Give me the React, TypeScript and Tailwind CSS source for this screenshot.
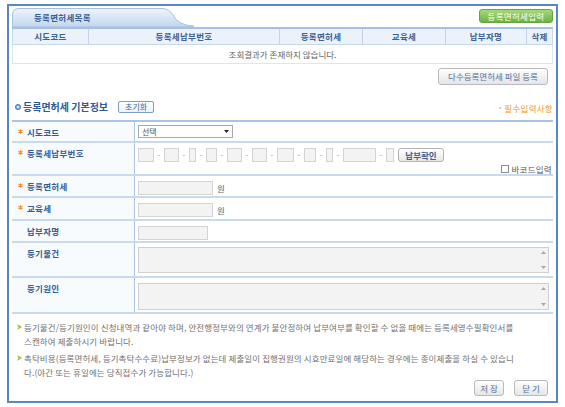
import React from 'react';

const boxes = [16, 15, 7, 11, 15, 15, 17, 12, 7, 33, 8];

// small orange required mark
const Req = () => (
  <svg width="5" height="5" viewBox="0 0 6 6" className="mt-[3px]">
    <path d="M3 0.3 V5.7 M0.6 1.6 L5.4 4.4 M0.6 4.4 L5.4 1.6" stroke="#f08a1d" strokeWidth="1.3" />
  </svg>
);

const Label = ({ text, req }: { text: string; req?: boolean }) => (
  <div className="w-[123px] shrink-0 border-r border-[#aac3e4] bg-[#f8fbfe] flex items-start pl-[6px] pt-[4px]">
    <span className="w-[9px] h-[12px] flex items-start">{req ? <Req /> : null}</span>
    <span className="text-[8.5px] leading-[12px] font-bold tracking-[0.3px] text-[#345d92]">{text}</span>
  </div>
);

const Row = ({ h, children }: { h: string; children: React.ReactNode }) => (
  <div className={`flex border-b-2 border-[#c9daef] ${h}`}>{children}</div>
);

const TextBox = ({ w }: { w: string }) => (
  <div className={`h-[14px] bg-[#f3f3f3] border border-[#d3d3d3] ${w}`} />
);

const Area = ({ h }: { h: string }) => (
  <div className={`w-[411px] ${h} bg-[#f3f3f3] border border-[#cfcfcf] flex justify-end`}>
    <div className="w-[10px] flex flex-col justify-between items-center py-[3px]">
      <svg width="5" height="3" viewBox="0 0 5 3"><path d="M2.5 0 L5 3 L0 3 Z" fill="#a8a8a8" /></svg>
      <svg width="5" height="3" viewBox="0 0 5 3"><path d="M0 0 L5 0 L2.5 3 Z" fill="#a8a8a8" /></svg>
    </div>
  </div>
);

const NoteMark = () => (
  <svg width="5" height="6" viewBox="0 0 5 6" className="mt-[4px] mr-[2px] shrink-0">
    <path d="M0 0 L5 3 L0 6 L1.5 3 Z" fill="#a3bd3c" />
  </svg>
);

const GrayBtn = ({ children, w }: { children: React.ReactNode; w: string }) => (
  <button className={`h-[16px] ${w} border border-[#b9b9b9] rounded-[3px] bg-gradient-to-b from-white to-[#e6e6e6] text-[8.5px] leading-[14px] text-[#4f6f99]`}>
    {children}
  </button>
);

export default function App() {
  return (
    <div className="w-[565px] h-[407px] bg-white pt-[4px] pl-[7px] font-['Noto_Sans_CJK_KR',sans-serif]">
      <div className="w-[551px] h-[399px] border-2 border-[#5b86c4] px-[3px] pt-[2px] flex flex-col">
        {/* list tab + add button */}
        <div className="flex items-start justify-between h-[19px]">
          <div className="relative w-[182px] h-[19px] pl-[22px]">
            <svg className="absolute inset-0" width="182" height="19" viewBox="0 0 182 19">
              <defs>
                <linearGradient id="tabg" x1="0" y1="0" x2="0" y2="1">
                  <stop offset="0" stopColor="#eef4fb" />
                  <stop offset="1" stopColor="#c3d6ef" />
                </linearGradient>
              </defs>
              <path d="M0.5 19 V7 Q0.5 0.5 7 0.5 H150 Q157 0.5 161 7 Q166 17.5 182 18 V19 Z" fill="url(#tabg)" stroke="#a4bfe1" />
            </svg>
            <span className="relative block pt-[3px] text-[8.5px] leading-[12px] font-bold tracking-[0.3px] text-[#3a5f93]">등록면허세목록</span>
          </div>
          <button className="mt-[1px] w-[74px] h-[14px] rounded-[3px] border border-[#66a640] bg-gradient-to-b from-[#a6d977] to-[#6cb244] text-white text-[8.5px] leading-[12px] tracking-[0.3px]">
            등록면허세입력
          </button>
        </div>
        <div className="h-[2px] bg-[#a6c0e3]" />

        {/* list table */}
        <div className="flex h-[16px] bg-[#ecf2fa] border-x border-b border-[#c8d8ec] text-[8.5px] font-bold text-[#3d6195] tracking-[0.3px]">
          <div className="w-[76px] border-r border-[#c3d4ea] flex items-center justify-center">시도코드</div>
          <div className="w-[191px] border-r border-[#c3d4ea] flex items-center justify-center">등록세납부번호</div>
          <div className="w-[83px] border-r border-[#c3d4ea] flex items-center justify-center">등록면허세</div>
          <div className="w-[83px] border-r border-[#c3d4ea] flex items-center justify-center">교육세</div>
          <div className="w-[81px] border-r border-[#c3d4ea] flex items-center justify-center">납부자명</div>
          <div className="flex-1 flex items-center justify-center">삭제</div>
        </div>
        <div className="h-[19px] border-x border-b border-[#dde5ef] flex items-center justify-center text-[8.5px] text-[#666]">
          조회결과가 존재하지 않습니다.
        </div>

        <div className="mt-[4px] flex justify-end pr-[5px]">
          <button className="h-[17px] w-[110px] border border-[#bababa] rounded-[3px] bg-gradient-to-b from-white to-[#e5e5e5] text-[8.5px] text-[#50709a]">
            다수등록면허세 파일 등록
          </button>
        </div>

        {/* section title */}
        <div className="mt-[15px] h-[14px] flex items-center justify-between">
          <div className="flex items-center pl-[3px]">
            <svg width="6" height="6" viewBox="0 0 6 6" className="mr-[2px]">
              <circle cx="3" cy="3" r="2.6" fill="#7ea6dc" stroke="#3f6db0" strokeWidth="0.8" />
              <circle cx="3" cy="3" r="1" fill="#ffffff" />
            </svg>
            <span className="text-[10px] font-bold text-[#2f5a94] leading-[14px]">등록면허세 기본정보</span>
            <button className="ml-[10px] w-[36px] h-[12px] border border-[#7d9cc6] rounded-[2px] bg-gradient-to-b from-white to-[#eef2f7] text-[8px] leading-[10px] text-[#3f6aa2]">
              초기화
            </button>
          </div>
          <div className="self-end text-[8.5px] leading-[10px] text-[#f0961e] tracking-[0.3px]">
            <span className="text-[7px] mr-[2px]">*</span>필수입력사항
          </div>
        </div>

        {/* form */}
        <div className="mt-[6px] border-t-2 border-[#a9c4e6]">
          <Row h="h-[21px]">
            <Label text="시도코드" req />
            <div className="pl-[3px] pt-[3px]">
              <div className="w-[95px] h-[13px] border border-[#a9a9a9] bg-white flex items-center justify-between px-[3px]">
                <span className="text-[8px] leading-[11px] text-[#555]">선택</span>
                <svg width="5" height="3" viewBox="0 0 5 3"><path d="M0 0 L5 0 L2.5 3 Z" fill="#222" /></svg>
              </div>
            </div>
          </Row>
          <Row h="h-[33px]">
            <Label text="등록세납부번호" req />
            <div className="flex-1 flex flex-col pl-[3px] pt-[5px] pr-[1px]">
              <div className="flex items-center">
                {boxes.map((w, i) => (
                  <React.Fragment key={i}>
                    {i > 0 && <span className="w-[10px] text-center text-[8px] leading-[14px] text-[#999]">-</span>}
                    <div className="h-[14px] bg-[#f3f3f3] border border-[#d3d3d3]" style={{ width: w }} />
                  </React.Fragment>
                ))}
                <button className="ml-[4px] h-[14px] w-[46px] border border-[#b3b3b3] rounded-[3px] bg-gradient-to-b from-white to-[#e8e8e8] text-[8.5px] leading-[12px] font-bold text-[#3a5f93]">
                  납부확인
                </button>
              </div>
              <div className="mt-[2px] flex justify-end items-center">
                <span className="w-[8px] h-[8px] border border-[#8a8a8a] bg-white mr-[2px]" />
                <span className="text-[8.5px] leading-[10px] text-[#555] tracking-[0.3px]">바코드입력</span>
              </div>
            </div>
          </Row>
          <Row h="h-[22px]">
            <Label text="등록면허세" req />
            <div className="pl-[3px] pt-[5px] flex items-start">
              <TextBox w="w-[75px]" />
              <span className="ml-[4px] text-[8.5px] leading-[14px] text-[#666]">원</span>
            </div>
          </Row>
          <Row h="h-[23px]">
            <Label text="교육세" req />
            <div className="pl-[3px] pt-[5px] flex items-start">
              <TextBox w="w-[75px]" />
              <span className="ml-[4px] text-[8.5px] leading-[14px] text-[#666]">원</span>
            </div>
          </Row>
          <Row h="h-[22px]">
            <Label text="납부자명" />
            <div className="pl-[3px] pt-[5px]">
              <TextBox w="w-[70px]" />
            </div>
          </Row>
          <Row h="h-[35px]">
            <Label text="등기물건" />
            <div className="pl-[3px] pt-[4px]">
              <Area h="h-[26px]" />
            </div>
          </Row>
          <Row h="h-[36px]">
            <Label text="등기원인" />
            <div className="pl-[3px] pt-[5px]">
              <Area h="h-[27px]" />
            </div>
          </Row>
        </div>

        {/* notes */}
        <div className="mt-[6px] pl-[5px] flex flex-col gap-[3px] text-[8.5px] leading-[14px] text-[#707070] tracking-[0.1px]">
          <div className="flex items-start">
            <NoteMark />
            <p className="whitespace-nowrap">
              등기물건/등기원인이 신청내역과 같아야 하며, 안전행정부와의 연계가 불안정하여 납부여부를 확인할 수 없을 때에는 등록세영수필확인서를
              <br />
              스캔하여 제출하시기 바랍니다.
            </p>
          </div>
          <div className="flex items-start">
            <NoteMark />
            <p className="whitespace-nowrap">
              촉탁비용(등록면허세, 등기촉탁수수료)납부정보가 없는데 제출일이 집행권원의 시효만료일에 해당하는 경우에는 종이제출을 하실 수 있습니
              <br />
              다.(야간 또는 휴일에는 당직접수가 가능합니다.)
            </p>
          </div>
        </div>

        <div className="mt-[1px] flex justify-end gap-[10px] pr-[5px]">
          <GrayBtn w="w-[30px]">저 장</GrayBtn>
          <GrayBtn w="w-[34px]">닫 기</GrayBtn>
        </div>
      </div>
    </div>
  );
}
